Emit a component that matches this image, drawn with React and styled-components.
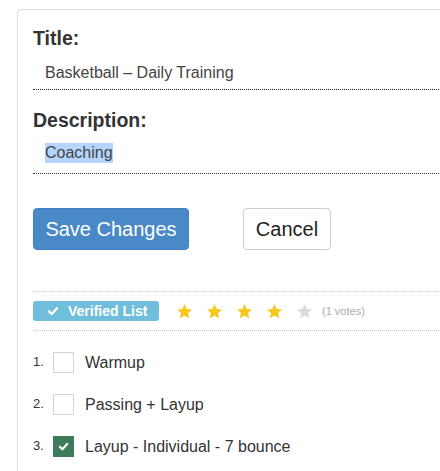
import React from "react";
import styled, { createGlobalStyle } from "styled-components";

const GlobalStyle = createGlobalStyle`
  html, body {
    margin: 0;
    padding: 0;
    background: #fff;
    overflow: hidden;
  }
  body {
    font-family: "Liberation Sans", Arial, sans-serif;
    color: #333;
  }
`;

const Page = styled.div`
  padding: 9px 0 0 17px;
  width: 440px;
  height: 471px;
  box-sizing: border-box;
  overflow: hidden;
`;

const Card = styled.div`
  width: 520px;
  height: 480px;
  border: 1px solid #ddd;
  border-right: none;
  border-radius: 4px 0 0 0;
  padding: 17px 0 0 15px;
  box-sizing: border-box;
`;

const Label = styled.div`
  font-size: 19.5px;
  font-weight: bold;
  color: #333;
  line-height: 22px;
  margin-top: ${(p) => p.top || 0}px;
`;

const Field = styled.div`
  font-size: 16px;
  color: #444;
  padding: 0 0 0 12px;
  height: ${(p) => p.h || 28}px;
  line-height: 22px;
  margin-top: ${(p) => p.top || 0}px;
  border-bottom: 1px dotted #333;
  box-sizing: border-box;
`;

const Selected = styled.span`
  background: #b4d5fe;
  display: inline-block;
  line-height: 20px;
`;

const Buttons = styled.div`
  display: flex;
  gap: 54px;
  margin-top: 34px;
`;

const Button = styled.button`
  height: 42px;
  padding: 0;
  font-family: "Liberation Sans", Arial, sans-serif;
  font-size: 20px;
  border-radius: 4px;
  cursor: pointer;
  width: ${(p) => p.w}px;
  background: ${(p) => (p.primary ? "#4a89c8" : "#fff")};
  color: ${(p) => (p.primary ? "#fff" : "#222")};
  border: 1px solid ${(p) => (p.primary ? "#4281c1" : "#ccc")};
`;

const RatingBar = styled.div`
  margin-top: 41px;
  width: 420px;
  border-top: 1px dotted #c8c8c8;
  border-bottom: 1px dotted #c8c8c8;
  display: flex;
  align-items: center;
  height: 40px;
  box-sizing: border-box;
`;

const Badge = styled.span`
  display: inline-flex;
  align-items: center;
  gap: 9px;
  height: 20px;
  width: 126px;
  padding-left: 14px;
  box-sizing: border-box;
  background: #6fbedc;
  border-radius: 3px;
  color: #fff;
  font-size: 14px;
  font-weight: bold;
`;

const Stars = styled.div`
  display: flex;
  gap: 13px;
  margin-left: 17px;
`;

const Votes = styled.span`
  font-size: 11px;
  color: #aaa;
  margin-left: 9px;
`;

const List = styled.ol`
  list-style: none;
  margin: 21px 0 0;
  padding: 0;
  display: flex;
  flex-direction: column;
  gap: 21px;
`;

const Item = styled.li`
  display: flex;
  align-items: center;
  height: 21px;
  font-size: 16px;
  color: #333;
`;

const Num = styled.span`
  width: 20px;
  font-size: 13px;
  margin-bottom: 3px;
`;

const Box = styled.span`
  width: 21px;
  height: 21px;
  box-sizing: border-box;
  border: 1px solid ${(p) => (p.checked ? "#3d7c5b" : "#d6d3ce")};
  background: ${(p) => (p.checked ? "#3d7c5b" : "#fff")};
  display: inline-flex;
  align-items: center;
  justify-content: center;
  margin-right: 11px;
`;

const Check = ({ size = 11, color = "#fff" }) => (
  <svg width={size} height={size} viewBox="0 0 12 12">
    <path d="M2 6.3 L4.8 9 L10 3.2" fill="none" stroke={color} strokeWidth="2.4" strokeLinecap="round" strokeLinejoin="round" />
  </svg>
);

const Star = ({ on }) => (
  <svg width="17" height="17" viewBox="0 0 24 24">
    <path
      d="M12 1.5 L15.1 8.3 L22.5 9.1 L17 14.1 L18.5 21.5 L12 17.8 L5.5 21.5 L7 14.1 L1.5 9.1 L8.9 8.3 Z"
      fill={on ? "#f7c81e" : "#dcdcdc"}
    />
  </svg>
);

const items = [
  { text: "Warmup", done: false },
  { text: "Passing + Layup", done: false },
  { text: "Layup - Individual - 7 bounce", done: true },
];

export default function App() {
  return (
    <Page>
      <GlobalStyle />
      <Card>
        <Label>Title:</Label>
        <Field top={13}>Basketball – Daily Training</Field>
        <Label top={19}>Description:</Label>
        <Field top={11} h={32}>
          <Selected>Coaching</Selected>
        </Field>
        <Buttons>
          <Button primary w={156}>Save Changes</Button>
          <Button w={88}>Cancel</Button>
        </Buttons>
        <RatingBar>
          <Badge>
            <Check size={12} />
            Verified List
          </Badge>
          <Stars>
            {[1, 2, 3, 4, 5].map((n) => (
              <Star key={n} on={n <= 4} />
            ))}
          </Stars>
          <Votes>(1 votes)</Votes>
        </RatingBar>
        <List>
          {items.map((it, i) => (
            <Item key={i}>
              <Num>{i + 1}.</Num>
              <Box checked={it.done}>{it.done && <Check size={11} />}</Box>
              {it.text}
            </Item>
          ))}
        </List>
      </Card>
    </Page>
  );
}
